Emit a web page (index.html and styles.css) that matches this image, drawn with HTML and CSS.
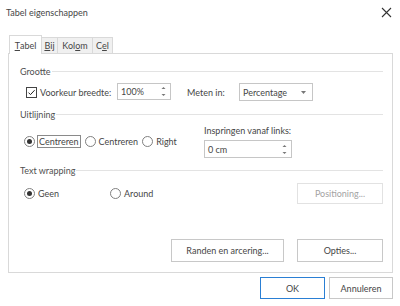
FILE: index.html
```html
<!DOCTYPE html>
<html lang="nl">
  <head>
    <meta charset="UTF-8" />
    <title>Tabel eigenschappen</title>
    <link rel="stylesheet" href="styles.css">
  </head>

  <body>
    <div id="dialog">
      <header class="dialog__head">
        <span class="dialog__title">Tabel eigenschappen</span>
        <button class="dialog__close" aria-label="Sluiten">
          <svg width="11" height="11" viewBox="0 0 11 11">
            <path d="M1 1L10 10M10 1L1 10" stroke="#333" stroke-width="1.1" fill="none" />
          </svg>
        </button>
      </header>

      <ul class="tabs">
        <li class="tabs__item tabs__item--active tabs__item--tabel"><u>T</u>abel</li>
        <li class="tabs__item tabs__item--bij"><u>B</u>ij</li>
        <li class="tabs__item tabs__item--kolom">Kol<u>o</u>m</li>
        <li class="tabs__item tabs__item--cel">C<u>e</u>l</li>
      </ul>

      <section class="panel">
        <div class="group group--size">Grootte</div>
        <div class="row row--size">
          <label class="check">
            <span class="check__box">
              <svg width="9" height="9" viewBox="0 0 9 9">
                <path d="M1.5 4.6L3.5 6.6L7.6 2.2" stroke="#222" stroke-width="1" fill="none" />
              </svg>
            </span>
            Voorkeur breedte:
          </label>
          <div class="field field--width">
            100%
            <span class="spin">
              <svg width="5" height="11" viewBox="0 0 5 11">
                <path d="M0.5 3L2.5 1L4.5 3Z M0.5 8L2.5 10L4.5 8Z" fill="#777" />
              </svg>
            </span>
          </div>
          <span class="row__label">Meten in:</span>
          <div class="field field--select">
            Percentage
            <svg class="caret" width="5" height="3" viewBox="0 0 5 3">
              <path d="M0 0H5L2.5 3Z" fill="#777" />
            </svg>
          </div>
        </div>

        <div class="group group--align">Uitlijning</div>
        <div class="row row--align">
          <div class="options options--align">
            <label class="radio radio--on"><span class="radio__dot"></span><span class="focus">Centreren</span></label>
            <label class="radio"><span class="radio__dot"></span>Centreren</label>
            <label class="radio"><span class="radio__dot"></span>Right</label>
          </div>
          <div class="indent">
            <span class="indent__label">Inspringen vanaf links:</span>
            <div class="field field--indent">
              0 cm
              <span class="spin">
                <svg width="5" height="11" viewBox="0 0 5 11">
                  <path d="M0.5 3L2.5 1L4.5 3Z M0.5 8L2.5 10L4.5 8Z" fill="#777" />
                </svg>
              </span>
            </div>
          </div>
        </div>

        <div class="group group--wrap">Text wrapping</div>
        <div class="row row--wrap">
          <label class="radio radio--on radio--geen"><span class="radio__dot"></span>Geen</label>
          <label class="radio"><span class="radio__dot"></span>Around</label>
          <button class="btn btn--disabled btn--positioning" disabled>Positioning...</button>
        </div>

        <div class="row row--actions">
          <button class="btn btn--randen">Randen en arcering...</button>
          <button class="btn btn--opties">Opties...</button>
        </div>
      </section>

      <footer class="dialog__foot">
        <button class="btn btn--ok">OK</button>
        <button class="btn btn--cancel">Annuleren</button>
      </footer>
    </div>
  </body>
</html>
```

FILE: styles.css
```css
* {
  box-sizing: border-box;
}

body {
  margin: 0;
  font-family: Lato, "Open Sans", sans-serif;
  font-size: 9px;
  color: #464646;
  background-color: #fff;
}

#dialog {
  width: 400px;
  height: 306px;
}

/* title bar */
.dialog__head {
  display: flex;
  align-items: center;
  justify-content: space-between;
  height: 24px;
  padding: 0 8px 0 6px;
}

.dialog__close {
  display: flex;
  padding: 0;
  border: 0;
  background: none;
}

/* tabs */
.tabs {
  position: relative;
  z-index: 1;
  display: flex;
  align-items: flex-end;
  height: 19px;
  margin: 11px 0 -1px 9px;
  padding: 0;
  list-style: none;
}

.tabs__item {
  display: flex;
  align-items: center;
  justify-content: center;
  height: 16px;
  margin: 0 0 1px -1px;
  border: 1px solid #d9d9d9;
  border-bottom: 0;
  background-color: #f0f0f0;
}

.tabs__item--active {
  height: 19px;
  margin: 0;
  background-color: #fff;
}

.tabs__item--tabel {
  width: 33px;
}

.tabs__item--bij {
  width: 17px;
}

.tabs__item--kolom {
  width: 36px;
}

.tabs__item--cel {
  width: 21px;
}

/* panel */
.panel {
  display: flex;
  flex-direction: column;
  height: 220px;
  margin: 0 7px 0 8px;
  padding: 0 9px 0 11px;
  border: 1px solid #d9d9d9;
}

.group {
  display: flex;
  align-items: center;
  height: 14px;
  color: #505050;
}

.group::after {
  content: "";
  flex: 1;
  height: 1px;
  margin-left: 1px;
  background-color: #e3e3e3;
}

.group--size {
  margin-top: 10px;
}

.group--align {
  margin-top: 6px;
}

.group--wrap {
  margin-top: 5px;
}

.row {
  display: flex;
}

.row--size {
  align-items: center;
  height: 18px;
  margin-top: 5px;
}

.row--align {
  height: 34px;
  margin-top: 3px;
}

.row--wrap {
  align-items: center;
  height: 21px;
  margin-top: 6px;
}

.row--actions {
  justify-content: flex-end;
  gap: 13px;
  margin-top: 35px;
}

/* checkbox */
.check {
  display: flex;
  align-items: center;
  width: 97px;
  padding-left: 6px;
}

.check__box {
  display: flex;
  align-items: center;
  justify-content: center;
  width: 11px;
  height: 11px;
  margin-right: 3px;
  border: 1px solid #444;
}

.row__label {
  width: 52px;
  margin-left: 16px;
}

/* text fields */
.field {
  display: flex;
  align-items: center;
  justify-content: space-between;
  padding: 0 3px 0 3px;
  border: 1px solid #c6c6c6;
  background-color: #fff;
}

.field--width {
  width: 54px;
  height: 17px;
  align-self: flex-start;
}

.field--select {
  width: 74px;
  height: 18px;
  padding-right: 6px;
}

.field--indent {
  width: 88px;
  height: 18px;
  margin-top: 3px;
}

.spin {
  display: flex;
  margin-right: 1px;
}

/* radios */
.options {
  display: flex;
  align-items: center;
}

.options--align {
  align-self: flex-start;
  width: 184px;
  height: 13px;
  margin-top: 11px;
  padding-left: 4px;
}

.radio {
  display: flex;
  align-items: center;
  gap: 3px;
  margin-right: 4px;
}

.radio__dot {
  display: flex;
  align-items: center;
  justify-content: center;
  width: 11px;
  height: 11px;
  border: 1px solid #808080;
  border-radius: 50%;
}

.radio--on .radio__dot::after {
  content: "";
  width: 5px;
  height: 5px;
  border-radius: 50%;
  background-color: #333;
}

.focus {
  height: 13px;
  margin-left: -1px;
  padding: 0 1px;
  line-height: 11px;
  border: 1px solid #8a8a8a;
}

.row--wrap .radio:first-child {
  margin-left: 4px;
}

.radio--geen {
  width: 82px;
}

.indent {
  display: flex;
  flex-direction: column;
}

.indent__label {
  height: 13px;
  line-height: 13px;
}

/* buttons */
.btn {
  padding: 0;
  font: inherit;
  color: #464646;
  border: 1px solid #c8c8c8;
  background-color: #fff;
}

.btn--positioning {
  width: 86px;
  height: 21px;
  margin-left: auto;
}

.btn--disabled {
  color: #a3a3a3;
  border-color: #e2e2e2;
}

.btn--randen {
  width: 113px;
  height: 23px;
}

.btn--opties {
  width: 86px;
  height: 23px;
}

.dialog__foot {
  display: flex;
  justify-content: flex-end;
  gap: 4px;
  margin: 4px 7px 0 0;
}

.btn--ok {
  width: 65px;
  height: 22px;
  border-color: #2a7fd4;
}

.btn--cancel {
  width: 64px;
  height: 22px;
}
```
